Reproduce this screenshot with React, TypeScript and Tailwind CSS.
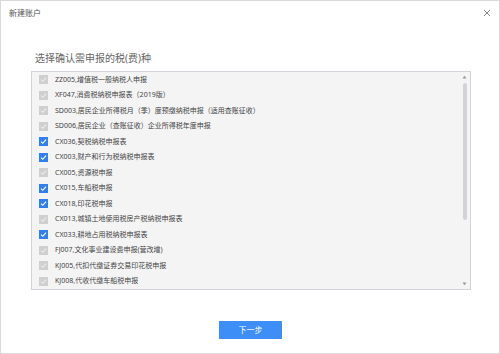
import React from 'react';

const items = [
  { code: 'ZZ005,增值税一般纳税人申报', on: false },
  { code: 'XF047,消费税纳税申报表（2019版）', on: false },
  { code: 'SD003,居民企业所得税月（季）度预缴纳税申报（适用查账征收）', on: false },
  { code: 'SD006,居民企业（查账征收）企业所得税年度申报', on: false },
  { code: 'CX036,契税纳税申报表', on: true },
  { code: 'CX003,财产和行为税纳税申报表', on: true },
  { code: 'CX005,资源税申报', on: false },
  { code: 'CX015,车船税申报', on: true },
  { code: 'CX018,印花税申报', on: true },
  { code: 'CX013,城镇土地使用税房产税纳税申报表', on: false },
  { code: 'CX033,耕地占用税纳税申报表', on: true },
  { code: 'FJ007,文化事业建设费申报(营改增)', on: false },
  { code: 'KJ005,代扣代缴证券交易印花税申报', on: false },
  { code: 'KJ008,代收代缴车船税申报', on: false },
];

const Check = ({ on }: { on: boolean }) => (
  <div
    className={`w-[9px] h-[9px] flex items-center justify-center ${on ? 'bg-[#2f7ff2]' : 'bg-[#cfcfcf]'}`}
  >
    <svg width="7" height="7" viewBox="0 0 7 7">
      <path d="M1 3.6 L2.8 5.3 L6 1.6" fill="none" stroke={on ? '#ffffff' : '#ececec'} strokeWidth="1.1" />
    </svg>
  </div>
);

const App = () => {
  return (
    <div className="w-[500px] h-[354px] bg-white border border-[#d9d9d9] flex flex-col font-['Noto_Sans','Noto_Sans_CJK_SC',sans-serif]">
      {/* title bar */}
      <div className="flex justify-between items-center pl-[8px] pr-[8px] pt-[6px] h-[18px]">
        <span className="text-[8px] leading-[10px] text-[#555]">新建账户</span>
        <svg width="8" height="8" viewBox="0 0 8 8" className="mt-[-1px]">
          <path d="M1 1 L7 7 M7 1 L1 7" stroke="#777" strokeWidth="0.9" />
        </svg>
      </div>

      <h2 className="ml-[34px] mt-[32px] text-[10px] leading-[14px] text-[#666]">选择确认需申报的税(费)种</h2>

      {/* list */}
      <div className="ml-[30px] mt-[6px] w-[440px] h-[219px] bg-[#f4f4f5] border border-[#d3d3da] flex">
        <div className="flex-1 flex flex-col">
          {items.map((it, i) => (
            <div key={i} className="h-[15.5px] flex items-center pl-[7px] gap-[7px]">
              <Check on={it.on} />
              <span className="text-[7px] leading-[10px] text-[#444] whitespace-nowrap">{it.code}</span>
            </div>
          ))}
        </div>
        <div className="w-[9px] flex flex-col items-center pt-[3px] pb-[3px] mr-[1px]">
          <svg width="5" height="4" viewBox="0 0 5 4">
            <path d="M0.5 3.5 L2.5 0.8 L4.5 3.5 Z" fill="#999" />
          </svg>
          <div className="mt-[4px] w-[4px] h-[137px] rounded-full bg-[#d2d2da]" />
          <div className="flex-1" />
          <svg width="5" height="4" viewBox="0 0 5 4">
            <path d="M0.5 0.5 L2.5 3.2 L4.5 0.5 Z" fill="#999" />
          </svg>
        </div>
      </div>

      <div className="flex justify-center mt-[31px]">
        <button className="w-[63px] h-[18px] bg-[#3e8ef7] text-white text-[8px] leading-[18px] pl-[1px]">下一步</button>
      </div>
    </div>
  );
};

export default App;
